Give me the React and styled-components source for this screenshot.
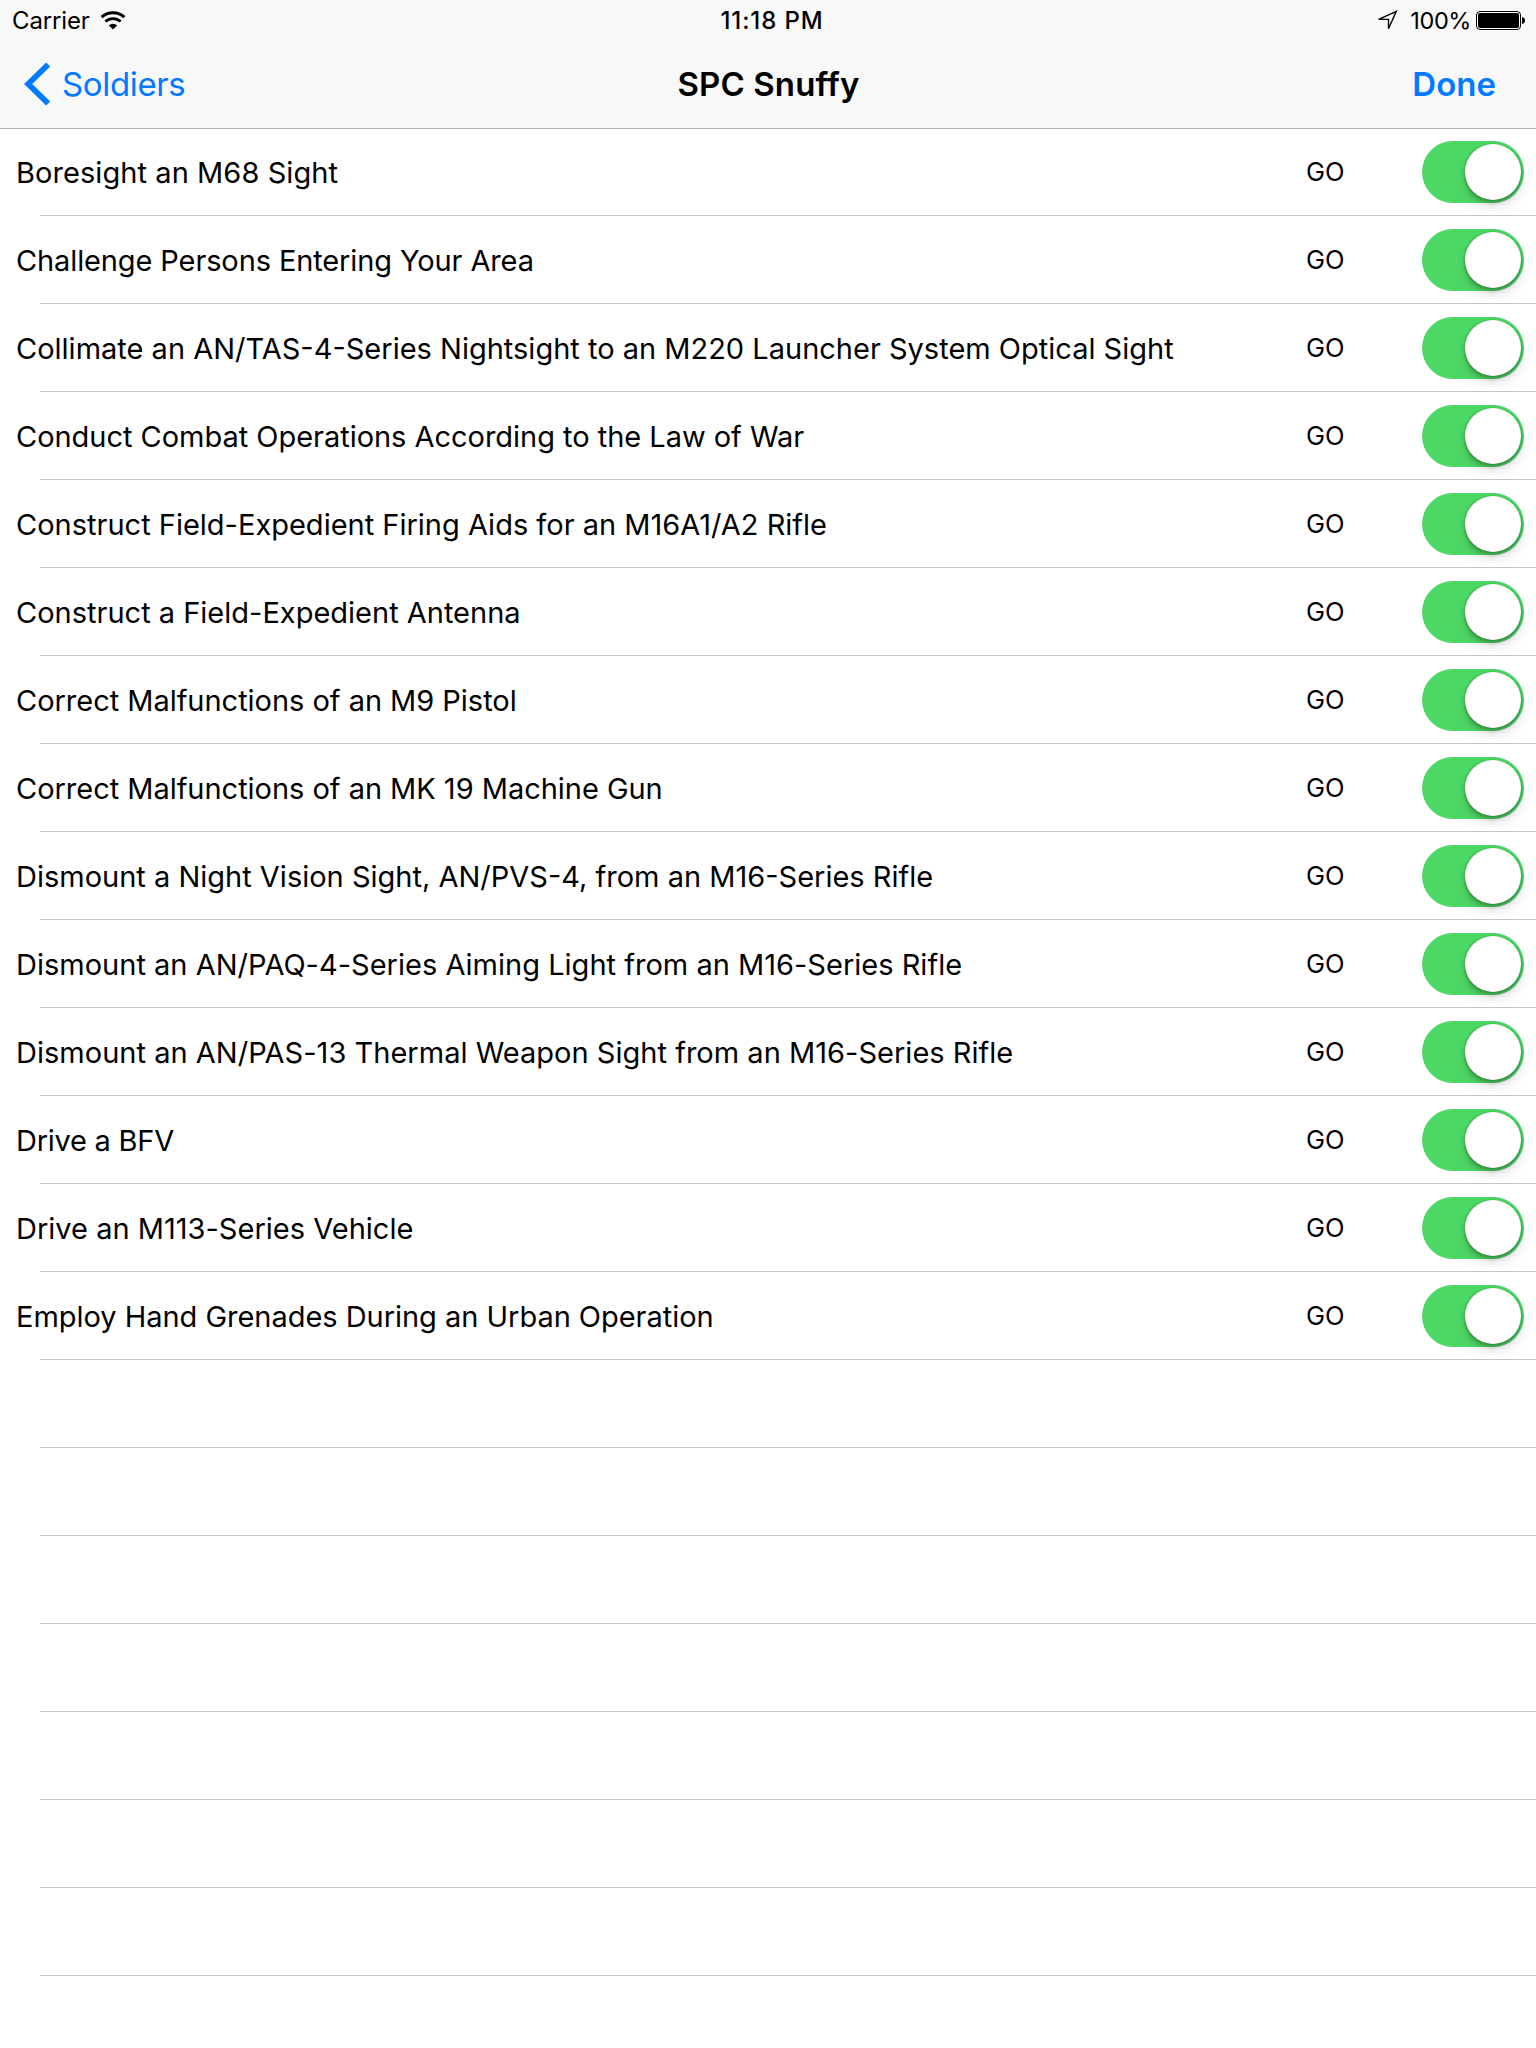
import React, { useState } from "react";
import styled, { createGlobalStyle } from "styled-components";

const GlobalStyle = createGlobalStyle`
  * {
    box-sizing: border-box;
  }
  body {
    margin: 0;
    background: #fff;
    color: #000;
    font-family: Inter, "Liberation Sans", sans-serif;
  }
`;

// spacing: letter-spacing of the title in px
const TASKS = [
  { title: "Boresight an M68 Sight", spacing: 0.07 },
  { title: "Challenge Persons Entering Your Area", spacing: -0.12 },
  {
    title:
      "Collimate an AN/TAS-4-Series Nightsight to an M220 Launcher System Optical Sight",
    spacing: 0,
  },
  { title: "Conduct Combat Operations According to the Law of War", spacing: -0.03 },
  { title: "Construct Field-Expedient Firing Aids for an M16A1/A2 Rifle", spacing: 0 },
  { title: "Construct a Field-Expedient Antenna", spacing: 0 },
  { title: "Correct Malfunctions of an M9 Pistol", spacing: -0.03 },
  { title: "Correct Malfunctions of an MK 19 Machine Gun", spacing: -0.03 },
  { title: "Dismount a Night Vision Sight, AN/PVS-4, from an M16-Series Rifle", spacing: 0 },
  { title: "Dismount an AN/PAQ-4-Series Aiming Light from an M16-Series Rifle", spacing: 0.01 },
  { title: "Dismount an AN/PAS-13 Thermal Weapon Sight from an M16-Series Rifle", spacing: 0.02 },
  { title: "Drive a BFV", spacing: -0.25 },
  { title: "Drive an M113-Series Vehicle", spacing: 0.01 },
  { title: "Employ Hand Grenades During an Urban Operation", spacing: -0.03 },
];

const EMPTY_ROWS = 7;

const Screen = styled.div`
  display: flex;
  flex-direction: column;
  width: 1536px;
  height: 2048px;
  overflow: hidden;
  background: #fff;
`;

const Header = styled.header`
  flex: none;
  height: 129px;
  margin-bottom: -1px;
  background: #f8f8f8;
  border-bottom: 1px solid #b2b2b2;
`;

const StatusBar = styled.div`
  display: grid;
  grid-template-columns: 1fr auto 1fr;
  align-items: center;
  height: 41px;
  padding: 0 11px 0 12px;
  font-size: 24px;
  line-height: 41px;
`;

const StatusLeft = styled.div`
  display: flex;
  align-items: center;
  gap: 10px;
`;

const Carrier = styled.span`
  letter-spacing: -0.15px;
`;

const Clock = styled.span`
  padding-left: 7px;
  font-weight: 500;
  letter-spacing: 0.9px;
`;

const StatusRight = styled.div`
  display: flex;
  align-items: center;
  justify-content: flex-end;
`;

const Percent = styled.span`
  margin: 0 5px 0 12px;
  font-size: 23.5px;
  letter-spacing: -0.4px;
`;

const NavBar = styled.nav`
  display: grid;
  grid-template-columns: 1fr auto 1fr;
  align-items: center;
  height: 87px;
  padding: 0 40px 2px 24px;
  font-size: 33px;
`;

const BackButton = styled.button`
  display: flex;
  align-items: center;
  justify-self: start;
  gap: 10px;
  padding: 0;
  border: 0;
  background: none;
  color: #007aff;
  font: inherit;
  letter-spacing: -0.35px;
`;

const Title = styled.h1`
  margin: 0;
  padding-left: 17px;
  font-size: 33px;
  font-weight: 600;
  letter-spacing: 0.1px;
`;

const DoneButton = styled.button`
  justify-self: end;
  padding: 0;
  border: 0;
  background: none;
  color: #007aff;
  font: inherit;
  font-weight: 600;
  letter-spacing: 0;
`;

const List = styled.ul`
  margin: 0;
  padding: 0;
  list-style: none;
`;

// the separator starts 40px in, further right than the text
const Row = styled.li`
  display: flex;
  align-items: center;
  height: 88px;
  padding: 0 12px 0 16px;
  background: linear-gradient(#c8c8c9, #c8c8c9) 40px 100% / 100% 1px no-repeat;
`;

const TaskName = styled.span`
  flex: 1;
  font-size: 29px;
  letter-spacing: ${(props) => props.$spacing}px;
  white-space: nowrap;
`;

const Status = styled.span`
  width: 116px;
  padding-bottom: 1px;
  font-size: 25.5px;
`;

const Switch = styled.button`
  display: flex;
  justify-content: ${(props) => (props.$on ? "flex-end" : "flex-start")};
  width: 102px;
  height: 62px;
  padding: 3px;
  border: 0;
  border-radius: 31px;
  background: ${(props) => (props.$on ? "#4dd865" : "#e5e5e5")};
`;

const Knob = styled.span`
  width: 56px;
  height: 56px;
  border-radius: 50%;
  background: #fff;
  box-shadow: 0 6px 14px rgba(0, 0, 0, 0.12), 0 3px 4px rgba(0, 0, 0, 0.26),
    0 0 2px rgba(0, 0, 0, 0.2);
`;

const WifiIcon = () => (
  <svg width="26" height="20" viewBox="0 0 26 20" fill="none" stroke="#000">
    <path d="M1.6 6.2A16.6 16.6 0 0 1 24.4 6.2" strokeWidth="3" />
    <path d="M5.4 10.6A11 11 0 0 1 20.6 10.6" strokeWidth="2.8" />
    <path d="M13 18.6L8.9 14.5A5.8 5.8 0 0 1 17.1 14.5Z" fill="#000" stroke="none" />
  </svg>
);

const LocationIcon = () => (
  <svg width="21" height="21" viewBox="0 0 21 21" fill="none" stroke="#000">
    <path d="M19.3 1.3L1.6 9.4H11.5V18.8Z" strokeWidth="1.4" />
  </svg>
);

const BatteryIcon = () => (
  <svg width="49" height="19" viewBox="0 0 49 19">
    <rect x="0.5" y="0.5" width="44" height="18" rx="3.5" fill="#fff" stroke="#000" />
    <rect x="2" y="2" width="41" height="15" rx="2" />
    <path d="M46 6C48 6.4 49 7.6 49 9.5S48 12.6 46 13Z" />
  </svg>
);

const ChevronIcon = () => (
  <svg width="28" height="44" viewBox="0 0 28 44" fill="none" stroke="#007aff">
    <path d="M24.2 2.5L4.2 22L24.2 41.5" strokeWidth="5.8" />
  </svg>
);

const TaskRow = ({ title, spacing }) => {
  const [on, setOn] = useState(true);
  return (
    <Row>
      <TaskName $spacing={spacing}>{title}</TaskName>
      <Status>{on ? "GO" : "NO GO"}</Status>
      <Switch $on={on} role="switch" aria-checked={on} onClick={() => setOn(!on)}>
        <Knob />
      </Switch>
    </Row>
  );
};

export default () => (
  <Screen>
    <GlobalStyle />
    <Header>
      <StatusBar>
        <StatusLeft>
          <Carrier>Carrier</Carrier>
          <WifiIcon />
        </StatusLeft>
        <Clock>11:18 PM</Clock>
        <StatusRight>
          <LocationIcon />
          <Percent>100%</Percent>
          <BatteryIcon />
        </StatusRight>
      </StatusBar>
      <NavBar>
        <BackButton>
          <ChevronIcon />
          Soldiers
        </BackButton>
        <Title>SPC Snuffy</Title>
        <DoneButton>Done</DoneButton>
      </NavBar>
    </Header>
    <List>
      {TASKS.map((task) => (
        <TaskRow key={task.title} {...task} />
      ))}
      {Array.from({ length: EMPTY_ROWS }, (_, i) => (
        <Row key={i} />
      ))}
    </List>
  </Screen>
);
